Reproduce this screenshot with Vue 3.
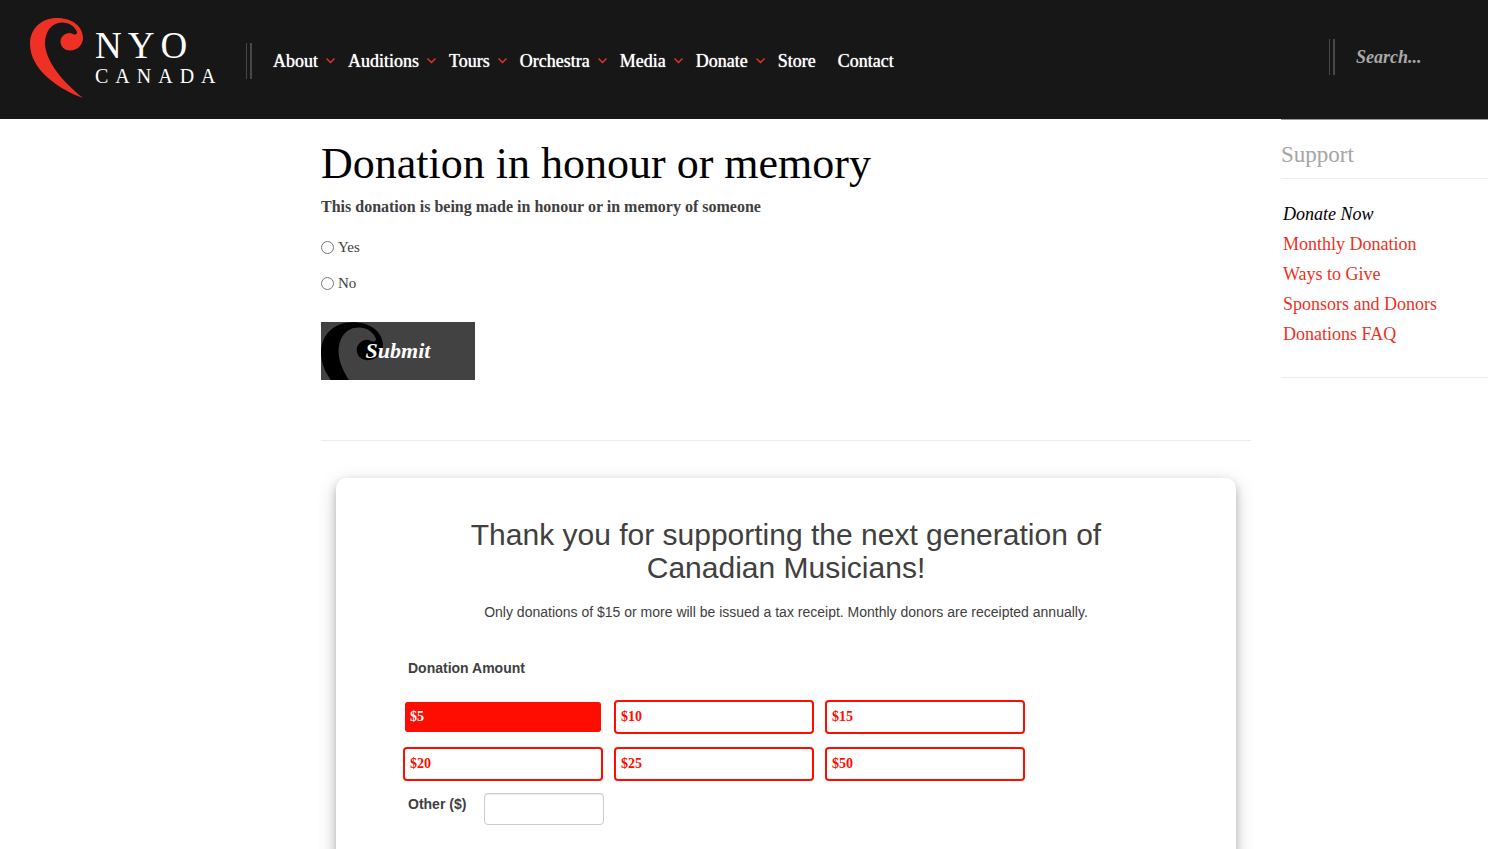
<script setup>
import { ref } from 'vue'

const swirl =
  'M83 98C60 90 30 70 30 44C30 28 42 18 57 18C73 18 83 27 83 38C83 45 77 50.500 70 50.500C64 50.500 60.500 46 60.500 41.500C60.500 37 65 33 69.500 33C72 33 73 35 75.500 34.500C77 34 77.500 32 76.500 31C74 26 69 22.500 62 22.500C51 22.500 45 32 45 44C46 62 63 82 83 98Z'

const menu = [
  { label: 'About', sub: true },
  { label: 'Auditions', sub: true },
  { label: 'Tours', sub: true },
  { label: 'Orchestra', sub: true },
  { label: 'Media', sub: true },
  { label: 'Donate', sub: true },
  { label: 'Store', sub: false },
  { label: 'Contact', sub: false },
]
const support = ['Monthly Donation', 'Ways to Give', 'Sponsors and Donors', 'Donations FAQ']
const amounts = [5, 10, 15, 20, 25, 50]
const amount = ref(5)
const tribute = ref('')
const other = ref('')
const query = ref('')
</script>

<template>
  <div class="page">
    <header class="top">
      <a class="logo" href="#" aria-label="NYO Canada">
        <svg class="logo-mark" viewBox="30 18 53 80" aria-hidden="true"><path :d="swirl" /></svg>
        <span class="logo-text">
          <span class="logo-name">NYO</span>
          <span class="logo-country">CANADA</span>
        </span>
      </a>
      <nav class="menu ruled" aria-label="Main">
        <a v-for="m in menu" :key="m.label" href="#" :class="{ plain: !m.sub }">
          {{ m.label }}
          <svg v-if="m.sub" viewBox="0 0 9 6" aria-hidden="true"><path d="M.5 .5L4.500 4.500L8.500 .5" /></svg>
        </a>
      </nav>
      <form class="search ruled" @submit.prevent>
        <input v-model="query" type="search" placeholder="Search..." aria-label="Search" />
      </form>
    </header>

    <div class="body">
      <main class="content">
        <h1>Donation in honour or memory</h1>
        <form @submit.prevent>
          <fieldset class="tribute">
            <legend>This donation is being made in honour or in memory of someone</legend>
            <label><input v-model="tribute" type="radio" name="tribute" value="yes" />Yes</label>
            <label><input v-model="tribute" type="radio" name="tribute" value="no" />No</label>
          </fieldset>
          <button class="submit" type="submit">
            <svg viewBox="30 18 53 80" aria-hidden="true"><path :d="swirl" /></svg>
            <span>Submit</span>
          </button>
        </form>
        <hr />
        <form class="card" @submit.prevent>
          <h2>Thank you for supporting the next generation of Canadian Musicians!</h2>
          <p>Only donations of $15 or more will be issued a tax receipt. Monthly donors are receipted annually.</p>
          <fieldset class="amounts">
            <legend>Donation Amount</legend>
            <div class="grid">
              <label v-for="a in amounts" :key="a" :class="{ selected: amount === a }">
                <input v-model="amount" type="radio" name="amount" :value="a" />${{ a }}
              </label>
            </div>
          </fieldset>
          <div class="other">
            <label for="other">Other ($)</label>
            <input id="other" v-model="other" type="text" />
          </div>
        </form>
      </main>

      <aside class="side">
        <h3>Support</h3>
        <ul>
          <li><a class="current" href="#">Donate Now</a></li>
          <li v-for="s in support" :key="s"><a href="#">{{ s }}</a></li>
        </ul>
      </aside>
    </div>
  </div>
</template>

<style>
body {
  background: #fff;
}
</style>

<style scoped>
.page {
  font-family: "Liberation Serif", "Times New Roman", serif;
  color: #404040;
}
.page * {
  box-sizing: border-box;
}
a {
  text-decoration: none;
}
fieldset {
  border: 0;
  margin: 0;
  padding: 0;
  min-width: 0;
}
legend {
  padding: 0;
}

.top {
  display: flex;
  align-items: flex-start;
  height: 119px;
  padding: 18px 30px 0;
  background: #171717;
}
.logo {
  display: flex;
  gap: 12px;
  width: 216px;
  color: #fff;
}
.logo-mark {
  width: 53px;
  height: 80px;
  fill: #ee3124;
}
.logo-text {
  display: flex;
  flex-direction: column;
  padding-top: 10px;
}
.logo-name {
  font-size: 37px;
  line-height: 36px;
  letter-spacing: 6px;
}
.logo-country {
  font-size: 20px;
  line-height: 24px;
  letter-spacing: 7px;
}
.ruled {
  height: 36px;
  border-left: 1px solid #484848;
  background: linear-gradient(#484848, #484848) 3px 0 / 2px 100% no-repeat;
}
.menu {
  display: flex;
  gap: 13px;
  margin-top: 25px;
  padding-left: 26px;
}
.menu a {
  display: flex;
  align-items: center;
  gap: 8px;
  color: #fff;
  font-size: 18px;
  line-height: 36px;
  text-shadow: 0 0 1px #fff;
}
.menu .plain + .plain {
  padding-left: 9px;
}
.menu svg {
  width: 9px;
  height: 6px;
  overflow: visible;
  fill: none;
  stroke: #ee3124;
  stroke-width: 1.4;
}
.search {
  width: 129px;
  margin: 21px 0 0 auto;
}
.search input {
  width: 100%;
  height: 100%;
  padding: 0 0 0 26px;
  border: 0;
  background: transparent;
  color: #fff;
  font: italic bold 18px "Liberation Serif", serif;
}
.search input::placeholder {
  color: #a9a9a9;
}

.body {
  display: grid;
  grid-template-columns: minmax(0, 1fr) 207px;
  column-gap: 30px;
  align-items: start;
  padding-left: 321px;
}
.content {
  padding-bottom: 40px;
}
h1 {
  margin: 0;
  padding: 20px 0 8px;
  color: #000;
  font-size: 44px;
  line-height: 50px;
  font-weight: 400;
}
.tribute legend {
  padding-bottom: 22px;
  font-size: 16px;
  line-height: 20px;
  font-weight: 700;
}
.tribute label {
  display: flex;
  align-items: center;
  gap: 4px;
  height: 16px;
  margin-bottom: 20px;
  font-size: 15px;
}
.tribute input {
  width: 13px;
  height: 13px;
  margin: 0;
}
.submit {
  position: relative;
  display: block;
  width: 154px;
  height: 58px;
  margin-top: 11px;
  padding: 0;
  overflow: hidden;
  border: 0;
  background: #424242;
  color: #fff;
  font: italic bold 22px "Liberation Serif", serif;
}
.submit svg {
  position: absolute;
  top: 0;
  left: 0;
  width: 62px;
  height: 94px;
}
.submit span {
  position: relative;
}
hr {
  margin: 60px 0 37px;
  border: 0;
  border-top: 1px solid #ececec;
}

.card {
  max-width: 900px;
  min-height: 440px;
  margin: 0 auto;
  padding: 40px 67px;
  border-radius: 10px;
  background: #fff;
  box-shadow: 0 4px 8px rgba(0, 0, 0, 0.2), 0 6px 20px rgba(0, 0, 0, 0.19);
  font-family: "Liberation Sans", Arial, sans-serif;
  font-size: 14px;
}
.card h2 {
  max-width: 700px;
  margin: 0 auto;
  font-size: 30px;
  line-height: 33px;
  font-weight: 400;
  text-align: center;
}
.card p {
  margin: 18px 0 36px;
  line-height: 20px;
  text-align: center;
}
.amounts legend {
  padding-left: 5px;
  font-weight: 700;
  line-height: 20px;
}
.grid {
  display: grid;
  grid-template-columns: repeat(3, 200px);
  gap: 13px 11px;
  padding-top: 22px;
}
.grid label {
  height: 34px;
  padding: 0 5px;
  border: 2px solid #ff0d00;
  border-radius: 4px;
  color: #ff0d00;
  font: bold 14px/29px "Liberation Serif", serif;
}
.grid .selected {
  border-color: #fff;
  background: #ff0d00;
  background-clip: padding-box;
  color: #fff;
}
.grid input {
  position: absolute;
  opacity: 0;
  margin: 0;
}
.other {
  display: flex;
  gap: 18px;
  margin-top: 12px;
  padding-left: 5px;
}
.other label {
  font-weight: 700;
  line-height: 22px;
}
.other input {
  width: 120px;
  height: 32px;
  border: 1px solid #ccc;
  border-radius: 4px;
  box-shadow: inset 0 1px 1px rgba(0, 0, 0, 0.08);
}

.side {
  border-top: 1px solid #999;
  border-bottom: 1px solid #ececec;
}
.side h3 {
  margin: 0;
  padding: 20px 0 9px;
  border-bottom: 1px solid #ececec;
  color: #a5a5a5;
  font-size: 23px;
  line-height: 29px;
  font-weight: 400;
}
.side ul {
  margin: 0;
  padding: 20px 0 28px 2px;
  list-style: none;
}
.side li {
  font-size: 18px;
  line-height: 30px;
}
.side a {
  color: #ee3124;
}
.side .current {
  color: #000;
  font-style: italic;
}
</style>
